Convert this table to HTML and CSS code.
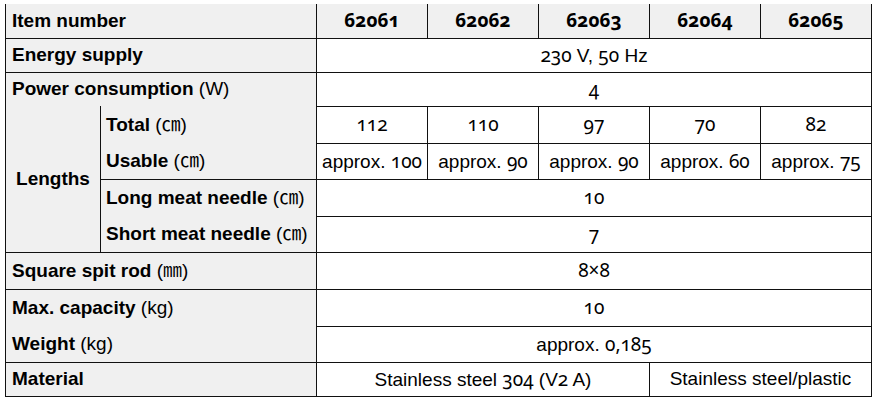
FILE: index.html
```html
<!DOCTYPE html>
<html lang="en">
<head>
<meta charset="utf-8">
<title>Item specifications</title>
<link rel="stylesheet" href="styles.css">
</head>
<body>
<table class="spec">
  <colgroup>
    <col class="c-group">
    <col class="c-label">
    <col class="c-data"><col class="c-data"><col class="c-data"><col class="c-data"><col class="c-data">
  </colgroup>
  <tr class="r-head">
    <th colspan="2" class="lbl">Item number</th>
    <th><span class="n">62061</span></th>
    <th><span class="n">62062</span></th>
    <th><span class="n">62063</span></th>
    <th><span class="n">62064</span></th>
    <th><span class="n">62065</span></th>
  </tr>
  <tr class="r34">
    <td colspan="2" class="lbl">Energy supply</td>
    <td colspan="5"><span class="n">230</span> V, <span class="n">50</span> Hz</td>
  </tr>
  <tr class="r34">
    <td colspan="2" class="lbl open-b">Power consumption <span class="u">(W)</span></td>
    <td colspan="5"><span class="n">4</span></td>
  </tr>
  <tr class="r37">
    <td rowspan="4" class="lbl grp">Lengths</td>
    <td class="lbl sub open-b">Total <span class="u">(㎝)</span></td>
    <td><span class="n">112</span></td>
    <td><span class="n">110</span></td>
    <td><span class="n">97</span></td>
    <td><span class="n">70</span></td>
    <td><span class="n">82</span></td>
  </tr>
  <tr class="r36">
    <td class="lbl sub">Usable <span class="u">(㎝)</span></td>
    <td>approx. <span class="n">100</span></td>
    <td>approx. <span class="n">90</span></td>
    <td>approx. <span class="n">90</span></td>
    <td>approx. <span class="n">60</span></td>
    <td>approx. <span class="n">75</span></td>
  </tr>
  <tr class="r37">
    <td class="lbl sub open-b">Long meat needle <span class="u">(㎝)</span></td>
    <td colspan="5"><span class="n">10</span></td>
  </tr>
  <tr class="r36">
    <td class="lbl sub">Short meat needle <span class="u">(㎝)</span></td>
    <td colspan="5"><span class="n">7</span></td>
  </tr>
  <tr class="r37">
    <td colspan="2" class="lbl">Square spit rod <span class="u">(㎜)</span></td>
    <td colspan="5"><span class="n">8×8</span></td>
  </tr>
  <tr class="r37">
    <td colspan="2" class="lbl open-b">Max. capacity <span class="u">(kg)</span></td>
    <td colspan="5"><span class="n">10</span></td>
  </tr>
  <tr class="r36">
    <td colspan="2" class="lbl">Weight <span class="u">(kg)</span></td>
    <td colspan="5">approx. <span class="n">0,185</span></td>
  </tr>
  <tr class="r34">
    <td colspan="2" class="lbl">Material</td>
    <td colspan="3">Stainless steel <span class="n">304</span> (V<span class="n">2</span> A)</td>
    <td colspan="2">Stainless steel/plastic</td>
  </tr>
</table>
</body>
</html>
```

FILE: styles.css
```css
html, body {
  margin: 0;
  padding: 0;
  background: #ffffff;
}

body {
  padding: 4px 0 0 5px;
  font-family: "Liberation Sans", Arial, "Noto Sans CJK JP", sans-serif;
  font-size: 19px;
  color: #000000;
}

.spec {
  border-collapse: collapse;
  table-layout: fixed;
  width: 867px;
}

.c-group { width: 95px; }
.c-label { width: 216px; }
.c-data { width: 111px; }

.spec th,
.spec td {
  border: 1px solid #111111;
  padding: 0 5px;
  text-align: center;
  vertical-align: middle;
  white-space: nowrap;
  font-weight: normal;
  line-height: 22px;
}

.spec th {
  border-top-style: hidden;
  background: #f0f0f0;
  font-weight: bold;
}

.r-head { height: 34px; }
.r34 { height: 34px; }
.r36 { height: 36px; }
.r37 { height: 37px; }

.lbl {
  background: #f0f0f0;
  font-weight: bold;
}

.spec .lbl {
  text-align: left;
  padding-left: 6px;
  font-weight: bold;
}

.spec .grp {
  text-align: center;
  padding: 0;
}

.spec .sub {
  padding-left: 5px;
}

.spec .open-b {
  border-bottom-style: hidden;
}

.u {
  font-weight: normal;
}

.n {
  font-family: "Noto Sans", "Liberation Sans", sans-serif;
  font-variant-numeric: oldstyle-nums;
}
```
